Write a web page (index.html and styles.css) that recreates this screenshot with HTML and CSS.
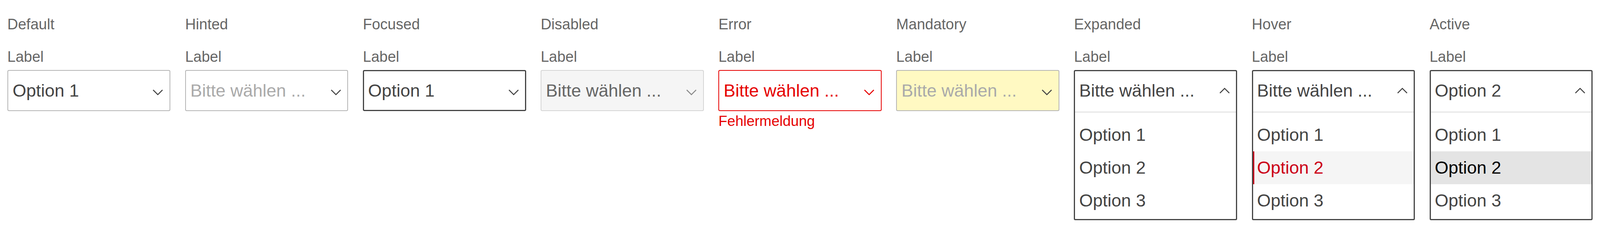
FILE: index.html
```html
<!DOCTYPE html>
<html lang="de">
<head>
<meta charset="utf-8">
<title>Select states</title>
<link rel="stylesheet" href="styles.css">
</head>
<body>
<main class="states">

  <section class="state">
    <h2 class="state-title">Default</h2>
    <div class="field-label">Label</div>
    <div class="select">
      <span class="select-value">Option 1</span>
      <svg class="chev chev-down" viewBox="0 0 28 16" width="28" height="16"><path d="M2 2 L14 14 L26 2"/></svg>
    </div>
  </section>

  <section class="state">
    <h2 class="state-title">Hinted</h2>
    <div class="field-label">Label</div>
    <div class="select select-hint">
      <span class="select-value">Bitte wählen ...</span>
      <svg class="chev chev-down" viewBox="0 0 28 16" width="28" height="16"><path d="M2 2 L14 14 L26 2"/></svg>
    </div>
  </section>

  <section class="state">
    <h2 class="state-title">Focused</h2>
    <div class="field-label">Label</div>
    <div class="select select-focus">
      <span class="select-value">Option 1</span>
      <svg class="chev chev-down" viewBox="0 0 28 16" width="28" height="16"><path d="M2 2 L14 14 L26 2"/></svg>
    </div>
  </section>

  <section class="state">
    <h2 class="state-title">Disabled</h2>
    <div class="field-label">Label</div>
    <div class="select select-disabled">
      <span class="select-value">Bitte wählen ...</span>
      <svg class="chev chev-down" viewBox="0 0 28 16" width="28" height="16"><path d="M2 2 L14 14 L26 2"/></svg>
    </div>
  </section>

  <section class="state">
    <h2 class="state-title">Error</h2>
    <div class="field-label">Label</div>
    <div class="select select-error">
      <span class="select-value">Bitte wählen ...</span>
      <svg class="chev chev-down" viewBox="0 0 28 16" width="28" height="16"><path d="M2 2 L14 14 L26 2"/></svg>
    </div>
    <div class="error-msg">Fehlermeldung</div>
  </section>

  <section class="state">
    <h2 class="state-title">Mandatory</h2>
    <div class="field-label">Label</div>
    <div class="select select-mandatory">
      <span class="select-value">Bitte wählen ...</span>
      <svg class="chev chev-down" viewBox="0 0 28 16" width="28" height="16"><path d="M2 2 L14 14 L26 2"/></svg>
    </div>
  </section>

  <section class="state">
    <h2 class="state-title">Expanded</h2>
    <div class="field-label">Label</div>
    <div class="dropdown">
      <div class="dropdown-head">
        <span class="select-value">Bitte wählen ...</span>
        <svg class="chev" viewBox="0 0 28 16" width="28" height="16"><path d="M2 14 L14 2 L26 14"/></svg>
      </div>
      <ul class="options">
        <li class="option">Option 1</li>
        <li class="option">Option 2</li>
        <li class="option">Option 3</li>
      </ul>
    </div>
  </section>

  <section class="state">
    <h2 class="state-title">Hover</h2>
    <div class="field-label">Label</div>
    <div class="dropdown">
      <div class="dropdown-head">
        <span class="select-value">Bitte wählen ...</span>
        <svg class="chev" viewBox="0 0 28 16" width="28" height="16"><path d="M2 14 L14 2 L26 14"/></svg>
      </div>
      <ul class="options">
        <li class="option">Option 1</li>
        <li class="option option-hover">Option 2</li>
        <li class="option">Option 3</li>
      </ul>
    </div>
  </section>

  <section class="state">
    <h2 class="state-title">Active</h2>
    <div class="field-label">Label</div>
    <div class="dropdown">
      <div class="dropdown-head">
        <span class="select-value">Option 2</span>
        <svg class="chev" viewBox="0 0 28 16" width="28" height="16"><path d="M2 14 L14 2 L26 14"/></svg>
      </div>
      <ul class="options">
        <li class="option">Option 1</li>
        <li class="option option-active">Option 2</li>
        <li class="option">Option 3</li>
      </ul>
    </div>
  </section>

</main>
</body>
</html>
```

FILE: styles.css
```css
* {
  box-sizing: border-box;
}

:root {
  /* one unit of the 6750px-wide design, scaled to the real viewport width */
  --u: calc(100vw / 6750);
}

html, body {
  margin: 0;
  padding: 0;
  background: #ffffff;
}

body {
  font-family: "Liberation Sans", Arial, Helvetica, sans-serif;
  color: #444444;
  overflow: hidden;
}

.states {
  display: grid;
  grid-template-columns: repeat(9, minmax(0, 1fr));
  column-gap: calc(var(--u) * 62);
  align-items: start;
  padding: 40px calc(var(--u) * 31) 0;
}

.state {
  display: flex;
  flex-direction: column;
  min-width: 0;
}

.state-title {
  margin: 0 0 39px 0;
  font-size: 38px;
  font-weight: normal;
  line-height: 44px;
  color: #666666;
  white-space: nowrap;
}

.field-label {
  font-size: 38px;
  line-height: 44px;
  color: #666666;
  margin-bottom: 12px;
}

.select {
  height: 105px;
  display: flex;
  align-items: center;
  justify-content: space-between;
  padding: 0 calc(var(--u) * 52.5 - 16px) 0 calc(var(--u) * 22 - 2px);
  border: 2px solid #b5b5b5;
  border-radius: 4px;
  background: #ffffff;
  font-size: 45px;
  color: #444444;
}

.select-value {
  white-space: nowrap;
  overflow: hidden;
}

.chev {
  flex: none;
  display: block;
  fill: none;
  stroke: #444444;
  stroke-width: 2.5;
}

.chev-down {
  margin-top: 8px;
}

.select-hint {
  color: #aaaaaa;
}

.select-focus {
  border: 3px solid #444444;
  padding: 0 calc(var(--u) * 52.5 - 17px) 0 calc(var(--u) * 22 - 3px);
}

.select-disabled {
  background: #f5f5f5;
  border-color: #d5d5d5;
  color: #666666;
}

.select-disabled .chev {
  stroke: #8a8a8a;
}

.select-error {
  border-color: #e60000;
  color: #e60000;
}

.select-error .chev {
  stroke: #e60000;
}

.select-mandatory {
  background: #fff9c2;
  color: #aaaaaa;
}

.error-msg {
  margin-top: 5px;
  font-size: 37px;
  line-height: 42px;
  color: #e60000;
  white-space: nowrap;
}

.dropdown {
  border: 3px solid #444444;
  border-radius: 4px;
  background: #ffffff;
  box-shadow: 0 14px 0 #d9d9d9;
  font-size: 45px;
  color: #444444;
}

.dropdown-head {
  height: 106px;
  display: flex;
  align-items: center;
  justify-content: space-between;
  padding: 0 calc(var(--u) * 52.5 - 17px) 4px calc(var(--u) * 22 - 3px);
  border-bottom: 3px solid #e6e6e6;
}

.options {
  list-style: none;
  margin: 0;
  padding: 15px 0 5px 0;
}

.option {
  height: 84px;
  line-height: 84px;
  padding-left: calc(var(--u) * 22 - 3px);
  white-space: nowrap;
}

.option-hover {
  background: #f5f5f5;
  color: #cc0018;
  box-shadow: inset 3px 0 0 #cc0018;
}

.option-active {
  background: #e4e4e4;
  color: #000000;
}
```
